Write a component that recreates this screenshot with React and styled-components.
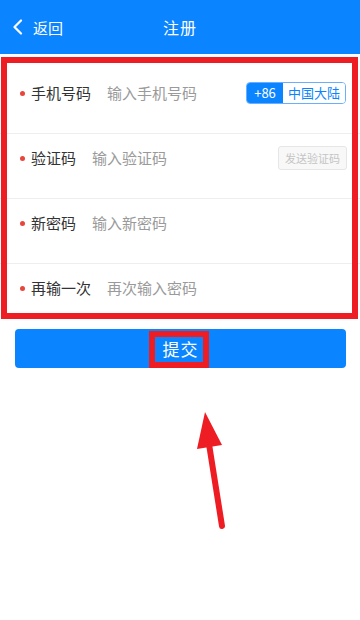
import React from "react";
import styled, { createGlobalStyle } from "styled-components";

const BLUE = "#0a84ff";
const MARK = "#ee1d24";

const GlobalStyle = createGlobalStyle`
  html, body {
    margin: 0;
    padding: 0;
    background: #fff;
  }
  body {
    font-family: "Noto Sans CJK SC", "Noto Sans", sans-serif;
    color: #333;
  }
  * {
    box-sizing: border-box;
  }
`;

const fields = [
  { label: "手机号码", placeholder: "输入手机号码", extra: "region" },
  { label: "验证码", placeholder: "输入验证码", extra: "code" },
  { label: "新密码", placeholder: "输入新密码" },
  { label: "再输一次", placeholder: "再次输入密码" },
];

const App = () => {
  return (
    <>
      <GlobalStyle />
      <Page>
        <Header>
          <BackBtn>
            <svg width="12" height="16" viewBox="0 0 12 16">
              <polyline
                points="9,1.5 2.5,8 9,14.5"
                fill="none"
                stroke="#fff"
                strokeWidth="2.2"
                strokeLinecap="round"
                strokeLinejoin="round"
              />
            </svg>
            <span>返回</span>
          </BackBtn>
          <Title>注册</Title>
          <div />
        </Header>

        <Form>
          {fields.map((f, i) => (
            <Row key={f.label} last={i === fields.length - 1}>
              <Dot />
              <Label>{f.label}</Label>
              <Input placeholder={f.placeholder} />
              {f.extra === "region" && (
                <Region>
                  <Code>+86</Code>
                  <Country>中国大陆</Country>
                </Region>
              )}
              {f.extra === "code" && <SendBtn>发送验证码</SendBtn>}
            </Row>
          ))}
          <FormMark />
        </Form>

        <SubmitWrap>
          <Submit>
            提交
            <TextMark />
          </Submit>
        </SubmitWrap>

        <Arrow width="360" height="620" viewBox="0 0 360 620">
          <line
            x1="222"
            y1="526"
            x2="209"
            y2="444"
            stroke={MARK}
            strokeWidth="6"
            strokeLinecap="round"
          />
          <polygon points="205,412 197,449 222,445" fill={MARK} />
        </Arrow>
      </Page>
    </>
  );
};

const Page = styled.div`
  position: relative;
  width: 360px;
  height: 620px;
  overflow: hidden;
  background: #fff;
`;

const Header = styled.div`
  display: grid;
  grid-template-columns: 1fr auto 1fr;
  align-items: center;
  height: 54px;
  background: ${BLUE};
  color: #fff;
`;

const BackBtn = styled.div`
  display: flex;
  align-items: center;
  gap: 9px;
  padding-left: 12px;
  font-size: 15px;
  svg {
    display: block;
  }
`;

const Title = styled.div`
  font-size: 16px;
  letter-spacing: 1px;
`;

const Form = styled.div`
  position: relative;
  padding-top: 15px;
`;

const Row = styled.div`
  display: flex;
  align-items: flex-start;
  height: 65px;
  padding: 14px 14px 0 20px;
  border-bottom: ${(p) => (p.last ? "none" : "1px solid #eeeeee")};
`;

const Dot = styled.span`
  width: 5px;
  height: 5px;
  border-radius: 50%;
  background: #e8453c;
  margin-top: 8px;
  margin-right: 6px;
  flex-shrink: 0;
`;

const Label = styled.div`
  font-size: 15px;
  line-height: 20px;
  color: #333;
  margin-right: 16px;
  white-space: nowrap;
`;

const Input = styled.input`
  flex: 1;
  min-width: 0;
  border: none;
  outline: none;
  padding: 0;
  font-family: inherit;
  font-size: 15px;
  line-height: 20px;
  height: 20px;
  color: #333;
  background: transparent;
  &::placeholder {
    color: #9a9a9a;
  }
`;

const Region = styled.div`
  display: flex;
  height: 22px;
  margin-top: -1px;
  border: 1px solid #6aaeff;
  border-radius: 4px;
  overflow: hidden;
  font-size: 13px;
  line-height: 20px;
  flex-shrink: 0;
`;

const Code = styled.span`
  width: 36px;
  text-align: center;
  background: ${BLUE};
  color: #fff;
`;

const Country = styled.span`
  width: 62px;
  text-align: center;
  color: ${BLUE};
  background: #fff;
`;

const SendBtn = styled.div`
  width: 69px;
  height: 24px;
  margin-top: -2px;
  margin-right: -1px;
  border: 1px solid #e6e6e6;
  border-radius: 3px;
  background: #f8f8f8;
  color: #c4c4c4;
  font-size: 11px;
  line-height: 22px;
  text-align: center;
  flex-shrink: 0;
`;

const FormMark = styled.div`
  position: absolute;
  top: 3px;
  left: 1px;
  right: 2px;
  height: 262px;
  border: 6px solid ${MARK};
  pointer-events: none;
`;

const SubmitWrap = styled.div`
  padding: 0 14px 0 15px;
`;

const Submit = styled.div`
  position: relative;
  display: flex;
  align-items: center;
  justify-content: center;
  height: 39px;
  border-radius: 4px;
  background: ${BLUE};
  color: #fff;
  font-size: 17px;
  letter-spacing: 1px;
`;

const TextMark = styled.span`
  position: absolute;
  top: 2px;
  left: 50%;
  margin-left: -32px;
  width: 60px;
  height: 37px;
  border: 6px solid ${MARK};
`;

const Arrow = styled.svg`
  position: absolute;
  top: 0;
  left: 0;
  pointer-events: none;
`;

export default App;
